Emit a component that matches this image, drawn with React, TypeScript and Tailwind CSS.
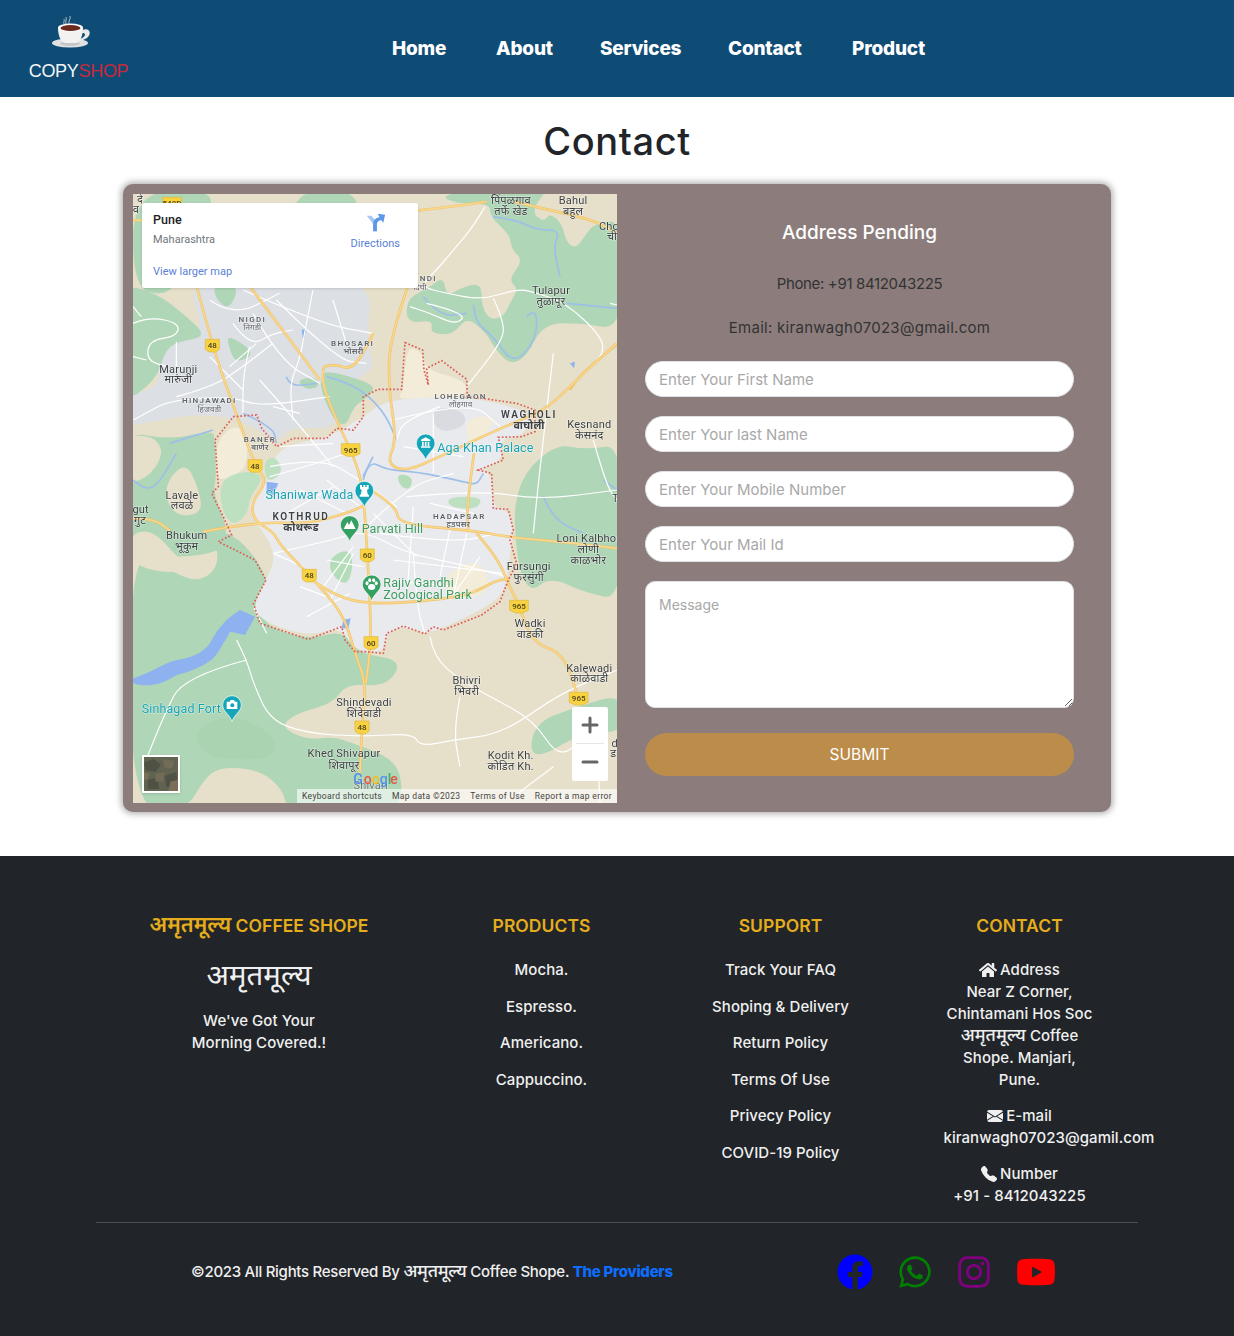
import { BsEnvelopeFill, BsTelephoneFill } from "react-icons/bs";
import { FaFacebook, FaWhatsapp, FaInstagram, FaYoutube, FaHome } from "react-icons/fa";
import { FiPlus, FiMinus } from "react-icons/fi";

type L = [number, number, string, number?, string?, number?, number?];

const sm = (pts: string, ox = 0, oy = 0, closed = true) => {
  const p = pts.trim().split(/\s+/).map((s) => {
    const [x, y] = s.split(",").map(Number);
    return [x + ox, y + oy];
  });
  const mid = (a: number[], b: number[]) => `${(a[0] + b[0]) / 2},${(a[1] + b[1]) / 2}`;
  if (closed) {
    let d = `M${mid(p[p.length - 1], p[0])}`;
    p.forEach((q, i) => {
      d += ` Q${q[0]},${q[1]} ${mid(q, p[(i + 1) % p.length])}`;
    });
    return d + "Z";
  }
  let d = `M${p[0][0]},${p[0][1]}`;
  for (let i = 1; i < p.length - 1; i++) d += ` Q${p[i][0]},${p[i][1]} ${mid(p[i], p[i + 1])}`;
  return d + ` L${p[p.length - 1][0]},${p[p.length - 1][1]}`;
};
const Bx = 39, By = -60, Cx = 870, Cy = -330;

const LABELS: L[] = [
  [175, 220, "Marunji"], [175, 250, "मारुंजी"],
  [397, 66, "NIGDI", 24, "#5f6368", 600, 4], [397, 90, "निगडी", 24, "#5f6368"],
  [698, 137, "BHOSARI", 24, "#5f6368", 600, 4], [700, 162, "भोसरी", 24, "#5f6368", 600],
  [268, 310, "HINJAWADI", 24, "#5f6368", 600, 4], [268, 335, "हिंजवडी", 24, "#5f6368"],
  [420, 426, "BANER", 24, "#5f6368", 600, 4], [420, 450, "बाणेर", 24, "#5f6368", 600],
  [1022, 297, "LOHEGAON", 24, "#5f6368", 600, 4], [1022, 322, "लोहगाव", 24, "#5f6368"],
  [1227, 354, "WAGHOLI", 30, "#3c4043", 600, 5], [1227, 386, "वाघोली", 32, "#3c4043", 700],
  [1408, 384, "Kesnand"], [1408, 416, "केसनंद"],
  [186, 596, "Lavale"], [186, 628, "लवळे"],
  [62, 640, "gut"], [60, 672, "गुट"],
  [543, 661, "KOTHRUD", 30, "#3c4043", 600, 5], [543, 694, "कोथरूड", 32, "#3c4043", 700],
  [200, 716, "Bhukum"], [200, 750, "भूकुम"],
  [1018, 657, "HADAPSAR", 24, "#5f6368", 600, 4], [1015, 680, "हडपसर", 24, "#5f6368", 600],
  [1405, 727, "Loni Kalbhor"], [1405, 758, "लोणी"], [1405, 792, "काळभोर"],
  [1226, 810, "Fursungi"], [1226, 842, "फुरसुंगी"],
  [1230, 982, "Wadki"], [1230, 1014, "वाडकी"],
  [1408, 1115, "Kalewadi"], [1408, 1146, "काळेवाडी"],
  [1040, 1152, "Bhivri"], [1040, 1184, "भिवरी"],
  [732, 1218, "Shindevadi"], [732, 1250, "शिंदेवाडी"],
  [672, 1372, "Khed Shivapur"], [672, 1406, "शिवापूर"],
  [1172, 1378, "Kodit Kh."], [1172, 1410, "कोडित Kh."],
  [752, 1468, "Shivari", 33, "#70757a"],
  [1173, -288, "पिंपळगाव"], [1173, -255, "तर्फे खेड"],
  [1359, -288, "Bahul"], [1359, -255, "बहुल"],
  [1473, -210, "Chor"], [1476, -180, "ची"],
  [1293, -18, "Tulapur"], [1293, 15, "तुळापूर"],
  [925, -57, "NDI", 24, "#5f6368", 600, 4], [900, -30, "दिघी", 24, "#5f6368"],
  [1484, 1342, "d"], [1480, 1372, "ड"], [1486, 606, "T"],
  [60, -292, "दे"], [48, -262, "व"],
];

const SHIELDS: [number, number, string][] = [
  [277, 136, "48"], [405, 497, "48"], [568, 826, "48"], [726, 1281, "48"],
  [692, 449, "965"], [1197, 919, "965"], [1376, 1195, "965"],
  [742, 765, "60"], [753, 1028, "60"], [156, -290, "548D"],
];

const Z2Y = [
  "225,-60 277,136 330,290 405,497 442,545 392,610 405,665 460,695 480,735 568,826 670,940 705,1060 738,1150 726,1281 720,1420",
  "250,695 410,665 560,672 680,640 735,615",
  "612,200 600,240 660,385 692,449 722,530 733,620 742,765 750,910 753,1028 738,1150",
  "870,-60 810,110 805,260 830,420 800,490 855,515 960,470 1130,390 1240,345 1300,310 1400,210 1491,130",
  "612,200 640,190 700,212 760,100",
  "760,575 830,620 835,672 1060,692 1170,712 1320,725 1491,745",
  "1070,700 1130,770 1165,850 1197,919 1240,1030 1330,1060 1376,1195",
  "590,850 650,890 750,912 900,905 1050,885 1130,840 1170,838",
  "1062,460 1040,620 1045,690",
  "39,655 100,655 150,692",
  "390,-40 600,240",
  "140,-100 225,-60",
  "39,-240 320,-225 600,-240 960,-275 1100,-295",
  "1180,-295 1310,-265 1420,-240 1491,-200",
];

const Z2W = [
  "460,760 640,720 730,690 860,760 1010,790 1160,830",
  "610,860 700,740", "880,760 890,920 915,1000", "1040,700 1000,890",
  "960,320 850,360 830,420", "940,340 940,520", "820,360 1050,300 1140,380",
  "860,590 1080,570 1260,600 1491,570",
  "1300,160 1260,500 1240,700", "1420,420 1460,560 1491,600",
  "440,1000 400,920", "350,1020 380,1080 400,1150 450,1260 560,1300 730,1310 880,1300 900,1340 1000,1320 1150,1300 1320,1180 1491,1110",
  "380,1080 190,1130 130,1250 70,1400",
  "930,1010 940,1070 1020,1140 1110,1190 1240,1260 1320,1380 1400,1300",
  "1020,1190 1000,1290 1020,1400", "1430,1300 1440,1509", "1300,1400 1180,1490",
  "730,690 860,560 1000,520", "760,640 890,770", "880,620 860,900", "1000,640 960,830",
  "620,780 730,800", "820,780 1150,820", "630,900 700,760", "540,860 620,890", "460,760 550,800",
  "450,500 600,470 720,540 830,620", "540,570 680,640", "620,540 720,620",
  "780,700 1000,730 1130,700", "790,840 1010,860", "560,950 690,880", "850,440 1030,470", "930,610 1060,640",
  "500,640 640,560", "1080,770 990,900",
];

const ZBW = [
  "330,30 560,130 720,160", "540,30 520,130 500,240 470,310 480,420",
  "300,130 350,200 420,160 480,150", "290,260 370,190", "130,350 240,320 330,260 420,190",
  "0,420 30,405 110,360 300,350 380,380 590,350", "350,200 330,280 330,400", "380,300 470,400 600,560",
  "420,380 500,400", "0,130 50,110 140,130 130,170 50,180 40,240 100,260", "0,230 40,240",
  "0,80 25,110", "130,185 130,260", "410,590 520,560 640,520", "440,500 600,490", "230,60 300,110 440,40",
  "430,60 610,240 700,250", "360,100 440,240 560,310", "230,230 330,330", "600,60 640,190",
];

const ZCW = [
  "225,50 190,110 130,180 80,240 30,290 110,310 215,330 320,297 370,305 470,340 575,440 580,490 550,520",
  "250,325 280,390 280,450 170,590", "50,340 170,370 140,405 60,370 0,350", "600,340 622,345",
];

const BLUE: string[] = [
  sm("250,80 320,90 380,120 450,120 430,170 450,260", Cx, Cy, false),
  sm("350,380 380,350 380,450 310,525 250,440 200,400 190,345", Cx, Cy, false),
  sm("470,340 622,355", Cx, Cy, false),
  sm("40,320 90,380 170,370", Cx, Cy, false),
  sm("460,290 470,320 550,310", Bx, By, false),
  sm("330,400 420,440 430,490", Bx, By, false),
  sm("110,490 240,450", Bx, By, false),
  sm("130,520 80,610 40,630 0,600", Bx, By, false),
  sm("690,590 720,530", Bx, By, false),
  sm("620,230 700,250 790,330 830,420", 0, 0, false),
  sm("730,540 745,480 800,510 890,515 1030,545 1070,555 1090,520", 0, 0, false),
  sm("1270,590 1300,660 1390,700", 0, 0, false),
  sm("1450,540 1491,570", 0, 0, false),
];

const Pin = ({ x, y, c, kind }: { x: number; y: number; c: string; kind: string }) => (
  <g transform={`translate(${x},${y})`}>
    <path d="M-28,0 A28,28 0 1 1 28,0 C28,20 6,28 0,50 C-6,28 -28,20 -28,0 Z" fill={c} stroke="#fff" strokeWidth="2" />
    {kind === "museum" && <path d="M-14,-11 L0,-18 L14,-11 L14,-7 L-14,-7 Z M-11,-5 H-6 V8 H-11 Z M-2.5,-5 H2.5 V8 H-2.5 Z M6,-5 H11 V8 H6 Z M-14,9 H14 V13 H-14 Z" fill="#fff" />}
    {kind === "rook" && <path d="M-13,-17 H-7 V-11 H-3 V-17 H3 V-11 H7 V-17 H13 V-6 L8,-1 L10,10 L14,14 V18 H-14 V14 L-10,10 L-8,-1 L-13,-6 Z" fill="#fff" />}
    {kind === "mount" && <path d="M-18,12 L-7,-9 L-2,0 L5,-14 L18,12 Z" fill="#fff" />}
    {kind === "paw" && <g fill="#fff"><ellipse cx="0" cy="8" rx="11" ry="9" /><ellipse cx="-14" cy="-3" rx="4.5" ry="6" /><ellipse cx="-6" cy="-12" rx="4.5" ry="6" /><ellipse cx="6" cy="-12" rx="4.5" ry="6" /><ellipse cx="14" cy="-3" rx="4.5" ry="6" /></g>}
    {kind === "camera" && <path d="M-16,-10 H-7 L-4,-15 H6 L9,-10 H16 V12 H-16 Z" fill="#fff" />}
    {kind === "camera" && <circle cx="1" cy="1" r="6" fill={c} />}
  </g>
);

const G = "#afd6b6";
const T = "#e6dfca";

const MapDrawing = () => (
  <svg viewBox="39 -318 1452 1827" className="absolute inset-0 h-full w-full blur-[0.35px] [font-family:Roboto,'Noto_Sans',sans-serif]">
    <defs>
      <filter id="soft"><feGaussianBlur stdDeviation="1.2" /></filter>
    </defs>
    <g filter="url(#soft)">
      <rect x="39" y="-318" width="1452" height="1827" fill={T} />
      {/* top left corner */}
      <path fill={G} d={sm("39,-330 290,-330 250,-240 130,-170 190,-70 130,-10 39,-40")} />
      <path fill={G} d={sm("540,-330 500,-220 640,-190 720,-250 700,-330")} />
      {/* north built-up */}
      <path fill="#dcdfe4" d={sm("150,-30 720,-30 700,200 730,270 600,330 620,450 470,440 440,490 330,420 200,400 30,430 -40,440 -40,350 90,320 60,210 120,160 220,170", Bx, By)} />
      {/* green left */}
      <path fill={G} d={sm("-40,10 70,40 150,100 225,170 130,185 95,215 70,300 -40,380", Bx, By)} />
      <path fill={G} d={sm("240,15 320,15 290,90 250,60", Bx, By)} />
      <path fill={G} d={sm("280,160 370,220 310,250 290,210", Bx, By)} />
      <path fill={G} d={sm("490,300 550,290 560,320 520,330", Bx, By)} />
      <path fill={G} d={sm("580,270 720,310 720,340 660,380 640,440 600,420 560,320 570,290", Bx, By)} />
      <path fill={G} d={sm("-40,450 110,480 240,450 245,480 250,590 240,640 290,760 250,830 -40,830", Bx, By)} />
      <path fill={T} d={sm("-40,470 60,465 95,520 40,600 -40,610", Bx, By)} />
      <path fill={T} d={sm("110,590 160,550 195,620 210,700 130,710 95,650", Bx, By)} />
      {/* south west */}
      <path fill={G} d={sm("30,760 130,800 230,850 300,800 280,700 340,700 430,800 450,900 420,970 560,1020 670,990 710,1060 850,1080 800,1160 680,1150 640,1210 530,1240 480,1280 560,1320 640,1310 700,1330 830,1380 850,1480 820,1530 500,1530 490,1470 420,1410 300,1400 250,1440 200,1530 30,1530")} />
      <path fill={T} d={sm("30,700 100,690 170,770 220,810 130,820 30,790")} />
      <path fill="#a9d3b1" d={sm("220,1290 330,1240 460,1300 470,1370 380,1380 250,1370")} />
      {/* north east */}
      <path fill={G} d={sm("90,15 135,40 240,40 240,80 300,135 305,180 340,210 295,270 325,295 300,340 280,380 240,390 215,350 215,280 160,290 110,320 100,260 60,290 40,300 -10,330 -10,400 70,390 60,430 130,435 170,380 230,430 250,470 300,525 350,500 400,400 520,400 640,420 640,90 555,100 530,130 500,175 470,160 455,100 420,70 380,90 370,50 420,-10 250,-10", Cx, Cy)} />
      <path fill={T} d={sm("380,60 410,50 420,80 390,95", Cx, Cy)} />
      {/* east */}
      <path fill={G} d={sm("1180,560 1300,430 1400,450 1510,430 1510,900 1400,880 1290,830 1230,880 1190,790")} />
      <path fill={G} d={sm("1510,1300 1400,1290 1230,1390 1240,1270 1370,1220 1510,1180")} />
      {/* city */}
      <path fill="#e9eaed" d={sm("470,440 620,415 730,350 800,300 960,290 1100,300 1240,340 1210,410 1140,415 1150,480 1075,510 1115,520 1120,625 1165,630 1180,690 1170,760 1160,850 1130,905 970,985 915,1000 850,978 800,1000 790,1060 700,1050 665,980 560,1010 420,960 400,910 440,840 470,760 410,670 380,610 440,560")} />
      <path fill="#d9dbe1" d={sm("930,320 1030,330 1040,380 950,400")} />
      <path fill="#f2ecd8" d={sm("250,480 310,430 345,480 340,570 270,600 250,590", Bx, By)} />
      <path fill="#bde0c0" d={sm("260,600 340,570 395,590 350,650 345,700 300,740 265,690", Bx, By)} />
      <path fill="#f2ecd8" d={sm("860,135 910,160 920,210 1035,240 1040,290 960,290 830,300 850,270")} />
      <path fill="#f2ecd8" d={sm("1040,350 1140,350 1060,440 1040,420")} />
      <path fill="#f2ecd8" d={sm("960,830 1080,770 1120,880 1000,900")} />
      <path fill="#b5dcb9" d={sm("630,770 690,745 700,800 680,860 630,820")} />
      <path fill="#b5dcb9" d={sm("830,520 880,530 870,570 840,560")} />
      <path fill="#bde0c0" d={sm("985,590 1090,590 1070,630 985,620")} />
      <path fill="#bde0c0" d={sm("430,480 470,470 490,520 440,550")} />
      {/* water */}
      <path fill="#8db2ef" d="M39,1135 C90,1120 130,1090 170,1080 C210,1075 250,1060 270,1030 C285,1000 310,960 360,930 L405,950 L375,1005 L330,995 C310,1030 300,1050 280,1075 C250,1100 200,1120 170,1125 C130,1150 90,1165 39,1150 Z" />
      <g fill="none" stroke="#9dbfe8" strokeWidth="5" strokeLinejoin="round">
        {BLUE.map((d, i) => <path key={i} d={d} />)}
      </g>
      <path fill="#8db2ef" d="M440,545 L475,550 L460,585 L440,575 Z M670,960 L692,955 L685,985 L665,985 Z M545,90 L560,85 L550,125 Z M1350,190 L1365,185 L1362,205 Z" />
      <g fill="none" stroke="#fff" strokeWidth="3.6" strokeLinejoin="round">
        {Z2W.map((d, i) => <path key={i} d={sm(d, 0, 0, false)} />)}
        {ZBW.map((d, i) => <path key={i} d={sm(d, Bx, By, false)} />)}
        {ZCW.map((d, i) => <path key={i} d={sm(d, Cx, Cy, false)} />)}
      </g>
      <g fill="none" strokeLinejoin="round">
        {Z2Y.map((d, i) => <path key={i} d={sm(d, 0, 0, false)} stroke="#efc36d" strokeWidth="8" />)}
        <path d={sm("480,600 510,550 640,450", Cx, Cy, false)} stroke="#efc36d" strokeWidth="6" />
        {Z2Y.map((d, i) => <path key={i} d={sm(d, 0, 0, false)} stroke="#fad98c" strokeWidth="4" />)}
      </g>
    </g>
    <path fill="none" stroke="#dc5a52" strokeWidth="5" strokeDasharray="5 6" d="M855,128 L908,150 L912,210 L925,255 L920,205 L965,182 L1040,238 L1042,290 L1100,297 L1190,310 L1245,330 L1245,395 L1205,410 L1135,412 L1150,480 L1075,510 L1115,520 L1120,625 L1165,628 L1180,690 L1170,720 L1190,790 L1165,840 L1140,905 L1085,945 L970,990 L940,980 L915,1002 L850,978 L800,1000 L790,1060 L740,1055 L705,1055 L675,1020 L665,980 L565,1018 L420,970 L400,912 L438,840 L405,780 L295,725 L335,705 L305,640 L275,580 L295,560 L285,420 L340,350 L410,345 L425,385 L470,440 L520,415 L620,415 L650,385 L700,390 L730,350 L730,290 L775,268 L845,268 Z" />
    {SHIELDS.map(([x, y, t]) => (
      <g key={x + t}>
        <path d={`M${x - (t.length > 2 ? 28 : 21)},${y - 18} H${x + (t.length > 2 ? 28 : 21)} V${y + 12} L${x + 10},${y + 20} H${x - 10} L${x - (t.length > 2 ? 28 : 21)},${y + 12} Z`} fill="#f9d33f" stroke="#e0b53b" strokeWidth="2" strokeLinejoin="round" />
        <text x={x} y={y + 9} textAnchor="middle" fontSize="24" fill="#4a4320" fontWeight="500">{t}</text>
      </g>
    ))}
    {LABELS.map(([x, y, t, s = 33, f = "#3c4043", w = 400, sp = 0.6]) => (
      <text key={t + x} x={x} y={y} textAnchor="middle" fontSize={s} fill={f} fontWeight={w} letterSpacing={sp} stroke="#ffffff" strokeOpacity="0.55" strokeWidth="3" paintOrder="stroke">{t}</text>
    ))}
    <g fontSize="37.5" letterSpacing="0.4" stroke="#ffffff" strokeOpacity="0.6" strokeWidth="3" paintOrder="stroke">
      <text x="952" y="456" fill="#16a3b3">Aga Khan Palace</text>
      <text x="700" y="596" textAnchor="end" fill="#16a3b3">Shaniwar Wada</text>
      <text x="725" y="700" fill="#3c9a5f">Parvati Hill</text>
      <text x="790" y="860" fill="#3c9a5f">Rajiv Gandhi</text>
      <text x="790" y="898" fill="#3c9a5f">Zoological Park</text>
      <text x="65" y="1240" fill="#16a3b3">Sinhagad Fort</text>
    </g>
    <Pin x={917} y={430} c="#14a5b8" kind="museum" />
    <Pin x={733} y={572} c="#14a5b8" kind="rook" />
    <Pin x={689} y={675} c="#35a063" kind="mount" />
    <Pin x={755} y={853} c="#35a063" kind="paw" />
    <Pin x={336} y={1215} c="#14a5b8" kind="camera" />
    <g fontSize="42" fontWeight="500" opacity="0.85">
      <text x="700" y="1452" fill="#4285f4">G</text>
      <text x="731" y="1452" fill="#ea4335">o</text>
      <text x="755" y="1452" fill="#fbbc05">o</text>
      <text x="779" y="1452" fill="#4285f4">g</text>
      <text x="803" y="1452" fill="#34a853">l</text>
      <text x="811" y="1452" fill="#ea4335">e</text>
    </g>
  </svg>
);

const Logo = () => (
  <svg viewBox="52 15 40 35" className="mr-[14px] h-[35px] w-[40px] blur-[0.3px]" aria-hidden="true">
    <path d="M66,24 C65,21 67,20 66,17 M69,24 C68,21 71,19 70,16 M64,24 C63,22 65,21 64,19" stroke="#cfd3d6" strokeWidth="0.8" fill="none" />
    <ellipse cx="70" cy="43" rx="18" ry="4.6" fill="#dfe1e2" />
    <ellipse cx="70" cy="43.6" rx="10" ry="2.2" fill="#c4c7c9" />
    <path d="M58,28 H83 C83,36 80,42 76,43 H65 C61,42 58,36 58,28 Z" fill="#f3f2f0" />
    <path d="M82,30 C90,27 92,34 87,38 L79,42 L80,39 C84,38 88,33 82,33 Z" fill="#e9e9e8" />
    <ellipse cx="70.5" cy="27.6" rx="12.5" ry="4" fill="#fafafa" />
    <ellipse cx="70.5" cy="28" rx="10" ry="3" fill="#6a2a1d" />
  </svg>
);

const Satellite = () => (
  <svg viewBox="0 0 36 36" className="h-full w-full" aria-hidden="true">
    <rect width="36" height="36" fill="#5f6350" />
    <path d="M0,6 L10,2 L18,8 L12,16 L2,14 Z M22,20 L34,16 L36,30 L24,32 Z M4,24 L14,22 L16,34 L4,34 Z" fill="#4f5144" />
    <path d="M20,2 L32,4 L30,12 L22,12 Z M12,18 L22,16 L20,26 L12,26 Z" fill="#716b58" />
    <path d="M28,26 L36,24 V36 H26 Z M0,16 L6,18 L4,24 L0,24 Z" fill="#7a6e57" />
  </svg>
);

const inputClass = "mb-[19px] h-[36px] w-full rounded-[18px] border border-[#dee2e6] bg-white px-[13px] text-[15px] text-[#212529] placeholder:text-[#a8a8a8] outline-none";
const deva = "text-[17.7px] leading-[0]";

export default function App() {
  return (
    <div className="w-[1234px] bg-white text-[15px] [font-family:Inter,'Noto_Sans',sans-serif]">
      <header className="flex h-[97px] items-start bg-[#0f4c75]">
        <div className="ml-[29px] flex w-[99px] flex-col items-center pt-[15px]">
          <Logo />
          <div className="mt-[10px] text-[18px] leading-[22px] tracking-[-0.3px] text-[#f2f6f8] [font-family:'Liberation_Sans',sans-serif]">
            COPY<span className="text-[#c8283c]">SHOP</span>
          </div>
        </div>
        <nav className="mt-[35px] ml-[264px] flex text-[19px] leading-[27px] font-extrabold tracking-[-0.2px] text-white">
          <span className="w-[104px]">Home</span>
          <span className="w-[104px]">About</span>
          <span className="w-[128px]">Services</span>
          <span className="w-[124px]">Contact</span>
          <span>Product</span>
        </nav>
      </header>

      <main className="flex h-[759px] flex-col items-center">
        <h1 className="mt-[21px] text-[38px] leading-[46px] font-medium tracking-[0.6px] text-[#212529]">Contact</h1>
        <section className="mt-[20px] flex h-[628px] w-[988px] rounded-[10px] bg-[#8c7d7c] p-[10px] shadow-[0_0_6px_2px_rgba(0,0,0,0.3)]">
          <div className="relative h-[609px] w-[484px] shrink-0 overflow-hidden [font-family:Roboto,sans-serif]">
            <MapDrawing />
            <div className="absolute top-[9px] left-[9px] flex h-[85px] w-[276px] justify-between rounded-[2px] bg-white pt-[9px] pr-[18px] pb-[9px] pl-[11px] shadow-sm">
              <div className="flex flex-col">
                <span className="text-[12.5px] leading-[16px] font-medium text-[#202124]">Pune</span>
                <span className="mt-[5px] text-[11px] leading-[14px] text-[#70757a]">Maharashtra</span>
                <span className="mt-auto text-[11px] leading-[14px] text-[#5b7fd6]">View larger map</span>
              </div>
              <div className="flex flex-col items-center">
                <svg viewBox="0 0 24 24" className="h-[22px] w-[22px]" aria-hidden="true">
                  <path d="M3,4 L8,4 L14,11 L14,21 L10,21 L10,13 Z" fill="#a9c7f0" />
                  <path d="M10,21 V13 C10,8 14,6 17,6 L15,2 L23,3 L21,12 L19,9 C16,9 14,11 14,14 V21 Z" fill="#5e97e6" />
                </svg>
                <span className="mt-[3px] text-[11px] leading-[14px] text-[#5b7fd6]">Directions</span>
              </div>
            </div>
            <div className="absolute right-[9px] bottom-[22px] flex h-[74px] w-[36px] flex-col items-center rounded-[2px] bg-white text-[#666]">
              <FiPlus className="mt-[6px] h-[24px] w-[24px]" strokeWidth={3} />
              <div className="mt-[6px] h-px w-[28px] bg-[#e6e6e6]" />
              <FiMinus className="mt-[6px] h-[24px] w-[24px]" strokeWidth={3} />
            </div>
            <div className="absolute bottom-[10px] left-[9px] h-[38px] w-[38px] border-2 border-white shadow-sm">
              <Satellite />
            </div>
            <div className="absolute right-0 bottom-0 flex h-[14px] w-[320px] items-center justify-between bg-white/60 px-[5px] text-[8.5px] tracking-[0.35px] text-[#444]">
              <span>Keyboard shortcuts</span>
              <span>Map data ©2023</span>
              <span>Terms of Use</span>
              <span>Report a map error</span>
            </div>
          </div>

          <div className="flex flex-1 flex-col items-center pr-[27px] pl-[28px]">
            <h2 className="mt-[25px] text-[19px] leading-[28px] font-medium text-white">Address Pending</h2>
            <p className="mt-[26px] leading-[22px] tracking-[-0.35px] text-[#333]">Phone: +91 8412043225</p>
            <p className="mt-[22px] leading-[22px] tracking-[0.28px] text-[#333]">Email: kiranwagh07023@gmail.com</p>
            <input className={`mt-[22px] ${inputClass}`} placeholder="Enter Your First Name" />
            <input className={inputClass} placeholder="Enter Your last Name" />
            <input className={inputClass} placeholder="Enter Your Mobile Number" />
            <input className={inputClass} placeholder="Enter Your Mail Id" />
            <textarea className="h-[127px] w-full rounded-[10px] border border-[#dee2e6] bg-white px-[13px] py-[13px] text-[14px] leading-[20px] outline-none placeholder:text-[#a8a8a8]" placeholder="Message" />
            <button className="mt-[25px] h-[43px] w-full rounded-[22px] bg-[#bc8c4a] text-[15.5px] text-white">SUBMIT</button>
          </div>
        </section>
      </main>

      <footer className="h-[480px] bg-[#212529] text-[15px] font-medium tracking-[0.05px] text-[#f0f0f0]">
        <div className="mx-[96px] grid grid-cols-[326px_239px_239px_239px] border-b border-[#4a4d51] pt-[57px] pb-[15px] text-center">
          <div className="flex flex-col items-center">
            <h3 className="text-[17.5px] leading-[26px] font-semibold text-[#e5ad1c]"><span className="text-[21.5px] leading-[0]">अमृतमूल्य</span> COFFEE SHOPE</h3>
            <div className="mt-[18px] text-[29.4px] leading-[36px] font-normal">अमृतमूल्य</div>
            <p className="mt-[17px] leading-[22px]">We've Got Your<br />Morning Covered.!</p>
          </div>
          <div className="flex flex-col items-center">
            <h3 className="text-[17.5px] leading-[26px] font-semibold text-[#e5ad1c]">PRODUCTS</h3>
            <ul className="mt-[20px] flex flex-col gap-[14.5px] leading-[22px]">
              <li>Mocha.</li>
              <li>Espresso.</li>
              <li>Americano.</li>
              <li>Cappuccino.</li>
            </ul>
          </div>
          <div className="flex flex-col items-center">
            <h3 className="text-[17.5px] leading-[26px] font-semibold text-[#e5ad1c]">SUPPORT</h3>
            <ul className="mt-[20px] flex flex-col gap-[14.5px] leading-[22px]">
              <li>Track Your FAQ</li>
              <li>Shoping &amp; Delivery</li>
              <li>Return Policy</li>
              <li>Terms Of Use</li>
              <li>Privecy Policy</li>
              <li>COVID-19 Policy</li>
            </ul>
          </div>
          <div className="flex flex-col items-center">
            <h3 className="text-[17.5px] leading-[26px] font-semibold text-[#e5ad1c]">CONTACT</h3>
            <div className="mt-[20px] w-[152px] leading-[22px]">
              <p className="flex items-center justify-center gap-[3px]"><FaHome className="h-[18px] w-[18px]" /> Address</p>
              <p className="whitespace-nowrap">Near Z Corner,<br />Chintamani Hos Soc<br /><span className={deva}>अमृतमूल्य</span> Coffee<br />Shope. Manjari,<br />Pune.</p>
              <p className="mt-[13.5px] flex items-center justify-center gap-[3px]"><BsEnvelopeFill className="h-[16px] w-[16px]" /> E-mail</p>
              <p className="whitespace-nowrap text-left">kiranwagh07023@gamil.com</p>
              <p className="mt-[14.5px] flex items-center justify-center gap-[3px]"><BsTelephoneFill className="h-[16px] w-[16px]" /> Number</p>
              <p>+91 - 8412043225</p>
            </div>
          </div>
        </div>
        <div className="mx-[96px] flex items-center pt-[29px] pl-[95px]">
          <p className="w-[489px] leading-[40px] tracking-[-0.28px] whitespace-nowrap">©2023 All Rights Reserved By <span className={deva}>अमृतमूल्य</span> Coffee Shope. <span className="font-extrabold text-[#0d6efd]">The Providers</span></p>
          <div className="ml-[157px] flex items-center">
            <FaFacebook className="h-[36px] w-[36px] text-[#0000ff]" />
            <FaWhatsapp className="ml-[26px] h-[36px] w-[32px] text-[#008000]" />
            <FaInstagram className="ml-[27px] h-[36px] w-[32px] text-[#800080]" />
            <FaYoutube className="ml-[26px] h-[36px] w-[40px] text-[#ff0000]" />
          </div>
        </div>
      </footer>
    </div>
  );
}
